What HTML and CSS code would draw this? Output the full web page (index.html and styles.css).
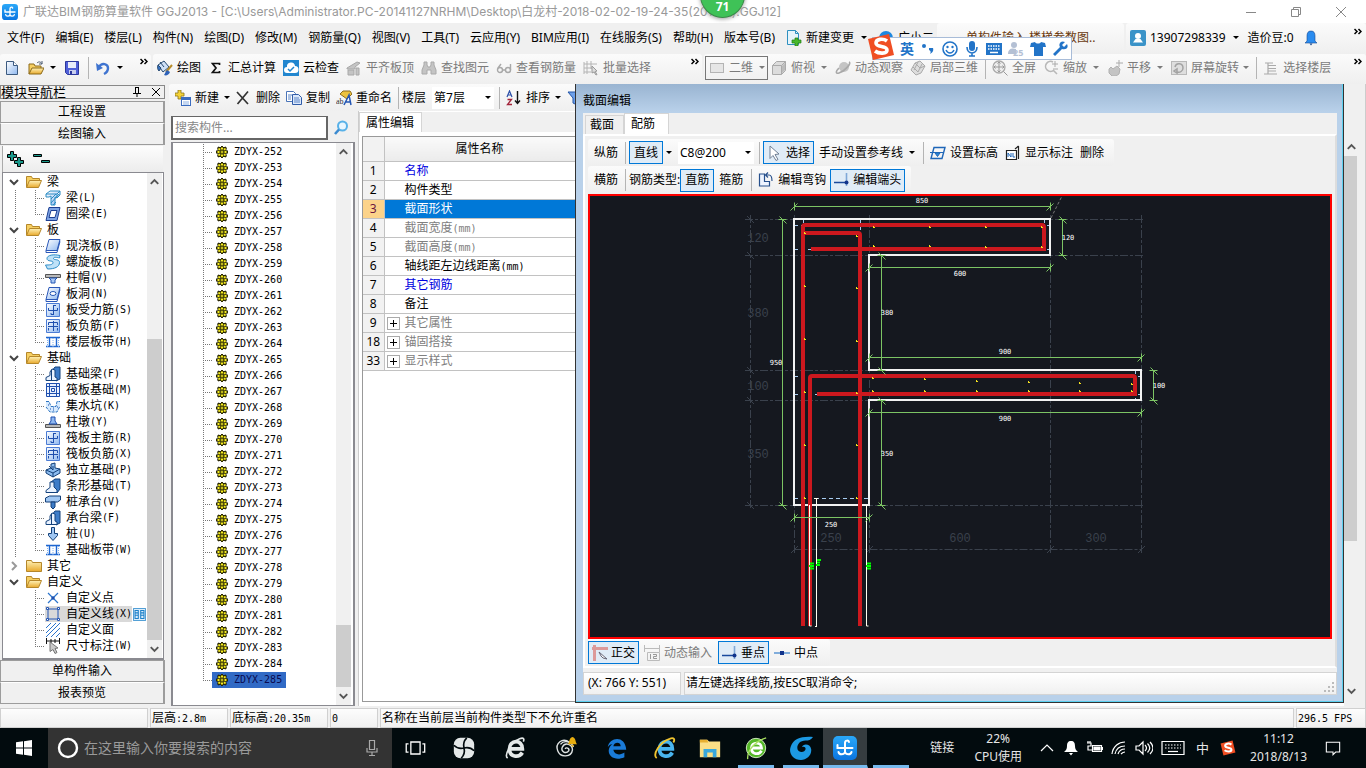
FILE: index.html
```html
<!DOCTYPE html>
<html lang="zh-CN">
<head>
<meta charset="utf-8">
<title>广联达BIM钢筋算量软件 GGJ2013</title>
<link rel="stylesheet" href="styles.css">
</head>
<body>
<svg class="sprite" aria-hidden="true">
  <defs>
    <linearGradient id="gFold" x1="0" y1="0" x2="0" y2="1"><stop offset="0" stop-color="#fff2b8"/><stop offset="1" stop-color="#e8a92c"/></linearGradient>
    <linearGradient id="gBlue" x1="0" y1="0" x2="1" y2="1"><stop offset="0" stop-color="#ffffff"/><stop offset="1" stop-color="#8fb8f0"/></linearGradient>
    <linearGradient id="gApp" x1="0" y1="0" x2="0" y2="1"><stop offset="0" stop-color="#2aa8f8"/><stop offset="1" stop-color="#0a74e0"/></linearGradient>
  </defs>
  <symbol id="app" viewBox="0 0 24 24"><rect width="24" height="24" rx="5" fill="url(#gApp)"/><path d="M4.500 9v3h15M12 17V7c0-3 3.500-3 4-1M12 16c-1 3-6 3-6.500 0M12 16c1 3 6 3 6.500 0" fill="none" stroke="#fff" stroke-width="2" stroke-linecap="round"/></symbol>
  <symbol id="new" viewBox="0 0 16 16"><path d="M2.500 1.500h7l4 4v9h-11z" fill="url(#gBlue)" stroke="#3c5a80"/><path d="M9.500 1.500v4h4" fill="#fff" stroke="#3c5a80"/></symbol>
  <symbol id="open" viewBox="0 0 16 16"><path d="M1 14V4h5l1 2h6v2" fill="#f6cf62" stroke="#8c6a1a"/><path d="M1 14l3-6h12l-3 6z" fill="url(#gFold)" stroke="#8c6a1a"/><path d="M9 3c2-2 4-1 5 1m0-3v3h-3" fill="none" stroke="#4a5a70"/></symbol>
  <symbol id="save" viewBox="0 0 16 16"><path d="M1.500 1.500h13v13h-11l-2-2z" fill="#4f5fd8" stroke="#2c379c"/><path d="M4 2h8v6H4z" fill="#e8ecfa"/><path d="M5 10h7v4H5z" fill="#c9cfee"/><path d="M6 11h2v3H6z" fill="#2c379c"/></symbol>
  <symbol id="undo" viewBox="0 0 16 16"><path d="M4 7c3-5 9-3 9 1 0 3-2 5-4 6" fill="none" stroke="#3f74d0" stroke-width="2.400"/><path d="M1 3l1 8 6-3z" fill="#3f74d0"/></symbol>
  <symbol id="paint" viewBox="0 0 16 16"><path d="M1 5l6-4 5 6-6 5z" fill="#cfe0f6" stroke="#27496f"/><path d="M1 5c-1 3 0 5 1 6l2-3zM3 2l4 5" fill="#3974c4" stroke="#27496f"/><path d="M15 5l-6 7" stroke="#b88c2a" stroke-width="2"/><path d="M10 10l3 2c-1 3-4 4-6 3 1-1 1-3 3-5z" fill="#2e62b8"/></symbol>
  <symbol id="sigma" viewBox="0 0 16 16"><path d="M11.500 5V3.500h-7l3.500 4.500-3.500 4.500h7V11" fill="none" stroke="#111" stroke-width="1.700"/></symbol>
  <symbol id="cloud" viewBox="0 0 16 16"><rect width="16" height="16" fill="#2186cf"/><path d="M4 13a3 3 0 0 1 0-6 4 4 0 0 1 8-1 3.500 3.500 0 0 1 0 7z" fill="#fff"/><path d="M5 9l2 2 4-4" fill="none" stroke="#2186cf" stroke-width="1.500"/></symbol>
  <symbol id="align" viewBox="0 0 16 16"><path d="M1 8l10-6 3 1-5 4v2H1zM2 10h6v5H2zM10 8h3v7h-3z" fill="#c4c4c4" stroke="#a8a8a8"/></symbol>
  <symbol id="find" viewBox="0 0 16 16"><path d="M3 2h3v3l1 2h2l1-2V2h3v3l2 5v4h-5v-4H6v4H1v-4l2-5z" fill="#c4c4c4" stroke="#aaa"/></symbol>
  <symbol id="glass" viewBox="0 0 16 16"><g fill="none" stroke="#a8a8a8" stroke-width="1.400"><circle cx="4" cy="10" r="2.500"/><circle cx="12" cy="10" r="2.500"/><path d="M6.500 10h3M2 8l3-4M14.500 10V4"/></g></symbol>
  <symbol id="batch" viewBox="0 0 16 16"><path d="M1 2v12M4 1v13M8 1v8M1 4h13M1 8h9M1 12h7" stroke="#b4b4b4" fill="none"/><path d="M9 6l5 5-2 .5 2 3-1 .5-2-3-2 1z" fill="#ddd" stroke="#999"/></symbol>
  <symbol id="rect" viewBox="0 0 16 16"><rect x="1.500" y="3.500" width="13" height="9" fill="#e6e6e6" stroke="#b4b4b4"/></symbol>
  <symbol id="cube" viewBox="0 0 16 16"><path d="M1.500 5.500l4-4h9v9l-4 4h-9z" fill="#dcdcdc" stroke="#aaa"/><path d="M1.500 5.500h9v9M10.500 5.500l4-4" fill="none" stroke="#aaa"/><path d="M11 6l3-3v7l-3 3z" fill="#bcbcbc"/></symbol>
  <symbol id="orbit" viewBox="0 0 16 16"><circle cx="9" cy="7" r="5" fill="#c4c4c4"/><path d="M14 2c3 1-4 9-10 11-3 1-4-1 0-5" fill="none" stroke="#a8a8a8" stroke-width="1.600"/></symbol>
  <symbol id="part3d" viewBox="0 0 16 16"><path d="M1 10l4-7 5-2 5 5-4 7-5 2z" fill="#ddd" stroke="#aaa"/><path d="M5 3l5 5 5-2M3 7l5 5M8 2l-4 8M12 4l-4 8" stroke="#aaa" fill="none"/></symbol>
  <symbol id="full" viewBox="0 0 16 16"><circle cx="7" cy="7" r="6" fill="#eee" stroke="#aaa" stroke-width="1.300"/><path d="M7 2v10M2 7h10M5.500 3.500L7 2l1.500 1.500M5.500 10.500L7 12l1.500-1.500M3.500 5.500L2 7l1.500 1.500M10.500 5.500L12 7l-1.500 1.500M11.500 11.500l4 4" stroke="#999" fill="none"/></symbol>
  <symbol id="zoomi" viewBox="0 0 16 16"><path d="M10 2a5 5 0 1 0 1 8M10 10l4 4" fill="none" stroke="#b8b8b8" stroke-width="1.600"/><path d="M12 1v6M9 4h6M10 9h5" stroke="#aaa"/></symbol>
  <symbol id="pan" viewBox="0 0 16 16"><path d="M2 9l2-2 2 2 4-3 3 3-1 5-3 2H5l-3-3z" fill="#c4c4c4" stroke="#b0b0b0"/><path d="M12 0v7M9 3h7" stroke="#aaa"/></symbol>
  <symbol id="rot" viewBox="0 0 16 16"><rect x=".5" y="1.500" width="15" height="13" fill="#dedede" stroke="#b8b8b8"/><path d="M4 7c1-5 8-4 8 1 0 3-3 5-6 4M6 9v4l-3-2z" fill="none" stroke="#a2a2a2" stroke-width="1.500"/></symbol>
  <symbol id="floors" viewBox="0 0 16 16"><path d="M2 3h8M5 5.500h8M5 8.500h8M5 11h8M1 14h13M5 3v11" stroke="#aaa" stroke-width="1.200" fill="none"/></symbol>
  <symbol id="newc" viewBox="0 0 16 16"><path d="M3 0h3v3h3v3H6v3H3V6H0V3h3z" fill="#f4d238" stroke="#8c7416" stroke-width=".8"/><rect x="6.500" y="7.500" width="9" height="8" fill="#fff" stroke="#3b6cc0"/><path d="M7 8h8v2H7z" fill="#3b6cc0"/><path d="M8 12h6M8 14h6" stroke="#8cb0e4"/></symbol>
  <symbol id="del" viewBox="0 0 16 16"><path d="M1 2l11 12M12 1.500L1.500 14" stroke="#333" stroke-width="1.700"/></symbol>
  <symbol id="copy" viewBox="0 0 16 16"><path d="M.5 1.500h7l2 2v8h-9z" fill="#fff" stroke="#4a74b8"/><path d="M6.500 4.500h6l3 3v7h-9z" fill="#dbe8fb" stroke="#2f5ba8"/><path d="M2 5h4M2 7h3M2 9h3M8 8h5M8 10h6M8 12h6" stroke="#5d86c8"/></symbol>
  <symbol id="ren" viewBox="0 0 16 16"><path d="M4 4l3-3h7l2 3-5 5z" fill="#ecc23e" stroke="#8c6a1a"/><text x="0" y="14" font-size="8" font-family="Liberation Serif" fill="#333">ab</text><path d="M8 15l5-10 2 10M10 12h5" fill="none" stroke="#2456b4" stroke-width="1.500"/></symbol>
  <symbol id="sort" viewBox="0 0 16 16"><path d="M1 7l2.500-6L6 7M2 5h3" fill="none" stroke="#2b4fa8" stroke-width="1.200"/><path d="M1.500 9.500h4l-4 5h4.500" fill="none" stroke="#a3243a" stroke-width="1.300"/><path d="M11.500 1v12M9 10.500l2.500 3 2.500-3" fill="none" stroke="#111" stroke-width="1.400"/></symbol>
  <symbol id="filter" viewBox="0 0 16 16"><path d="M1 2h14l-5 6v7l-4-2V8z" fill="#6da0ea" stroke="#2556a8"/></symbol>
  <symbol id="mag" viewBox="0 0 16 16"><circle cx="9.500" cy="6" r="4.500" fill="#e8f6ff" stroke="#58b1e8" stroke-width="2"/><path d="M6 9.500l-4 4.500" stroke="#3a8ad0" stroke-width="2.600"/></symbol>
  <symbol id="docadd" viewBox="0 0 16 16"><path d="M1.500.5h8l3 3v11h-11z" fill="#e6f4fb" stroke="#2e90c0"/><path d="M9.500.5v3h3" fill="none" stroke="#2e90c0"/><path d="M9 8h3v2h3v3h-3v3H9v-3H6v-3h3z" fill="#48b82c" stroke="#1f7d16" stroke-width=".7"/></symbol>
  <symbol id="user" viewBox="0 0 16 16"><rect width="16" height="16" rx="2" fill="#3a93c8"/><circle cx="8" cy="6" r="3" fill="#fff"/><path d="M3 12.500h10L10.500 9h-5z" fill="#fff"/></symbol>
  <symbol id="bell" viewBox="0 0 16 16"><path d="M8 1c3 0 4 2 4 5s1 4 3 6H1c2-2 3-3 3-6s1-5 4-5zM6 13h4l-2 2.500z" fill="currentColor"/></symbol>
  <symbol id="bell2" viewBox="0 0 16 16"><path d="M8 1c3 0 4 2 4 5v5l2 2H2l2-2V6c0-3 1-5 4-5z" fill="#2a8cf0" stroke="#1a4a90" stroke-width=".6"/><path d="M6.500 13.500h3L8 15.500z" fill="#1a4a90"/></symbol>
  <symbol id="chev" viewBox="0 0 16 16"><path d="M4 6l4 4 4-4" fill="none" stroke="currentColor" stroke-width="2"/></symbol>
  <symbol id="more" viewBox="0 0 8 8"><path d="M.5 1L3 3.500.5 6M4.500 1L7 3.500 4.500 6" fill="none" stroke="#000" stroke-width="1.500"/></symbol>
  <symbol id="fopen" viewBox="0 0 16 16"><path d="M.5 13V2.500h5l1 2h7V7" fill="#f6cf62" stroke="#b5872a"/><path d="M.5 13.500l3-7h12l-3 7z" fill="url(#gFold)" stroke="#b5872a"/></symbol>
  <symbol id="fshut" viewBox="0 0 16 16"><path d="M.5 13.500v-11h5l1 2h9v9z" fill="url(#gFold)" stroke="#b5872a"/></symbol>
  <symbol id="t-beam" viewBox="0 0 16 16"><path d="M1 4l4-3h10l-3 3zM1 4v3h3l2-1v9h4V7l2 1V4M12 8l3-3V1" fill="url(#gBlue)" stroke="#2b8cc4"/><path d="M6 13l8-9M6 9l5-5M8 15l3-3" stroke="#2b8cc4"/></symbol>
  <symbol id="t-ring" viewBox="0 0 16 16"><path d="M4 1.500h11l-3 13H1z" fill="#7fa4e4" stroke="#1c3f92"/><path d="M6 4.500h6L10 11.500H4z" fill="#fff" stroke="#1c3f92"/></symbol>
  <symbol id="t-slab" viewBox="0 0 16 16"><path d="M4 1.500h11l-3 11H1z" fill="url(#gBlue)" stroke="#2b58b8"/><path d="M1 12.500v2h11l3-11" fill="none" stroke="#2b58b8"/></symbol>
  <symbol id="t-spiral" viewBox="0 0 16 16"><path d="M15 1.500C9 0 2 1 2 4.500 2 8 8 6 8 8.500S4 11 .5 11l2 4c7 0 12-2 12-6.500 0-4-6-2-6-4s4-1 6-.5z" fill="#bfe2f8" stroke="#2c8cc8"/></symbol>
  <symbol id="t-cap" viewBox="0 0 16 16"><path d="M.5 4.500h15v3H.5z" fill="#b8b8b8" stroke="#555"/><path d="M4 8h8l-2 2v3H6v-3z" fill="#a9c8f4" stroke="#2456b4"/></symbol>
  <symbol id="t-hole" viewBox="0 0 16 16"><path d="M4 1.500h11l-3 12H1z" fill="url(#gBlue)" stroke="#2b58b8"/><ellipse cx="8" cy="7.500" rx="3" ry="2" fill="#fff" stroke="#2456b4"/><path d="M1 13.500v2h11l3-12" fill="none" stroke="#2b58b8"/></symbol>
  <symbol id="t-reb1" viewBox="0 0 16 16"><path d="M1.500 1.500h13v13h-13z" fill="url(#gBlue)" stroke="#4c7cd4"/><path d="M8.500 3v10M8 3.500h3M3.500 6v2.500h9V6M8 12.500H6V11" fill="none" stroke="#1e4fae"/></symbol>
  <symbol id="t-reb2" viewBox="0 0 16 16"><path d="M1.500 1.500h13v13h-13z" fill="url(#gBlue)" stroke="#4c7cd4"/><path d="M8.500 3v10M3.500 7V4.500h9V7M3 8.500h10M3.500 10v2.500M12.500 10v2.500" fill="none" stroke="#1e4fae"/></symbol>
  <symbol id="t-band" viewBox="0 0 16 16"><path d="M1 3.500h14M1 12.500h14M4.500 3v10M11.500 3v10" stroke="#1e66d0" stroke-width="1.400"/><path d="M2.500 4v9M13.500 4v9M8 4v9" stroke="#7fb0f0" stroke-dasharray="1 1"/></symbol>
  <symbol id="t-fbeam" viewBox="0 0 16 16"><path d="M6 6l4-5h5v12l-4 2" fill="#3d7cc8" stroke="#14427c"/><path d="M1 14.500v-3l4-2V6l2-3 3 1v7l2 1v2.500z" fill="#eaf3ff" stroke="#14427c"/><path d="M6.500 4v10" stroke="#14427c"/></symbol>
  <symbol id="t-raft" viewBox="0 0 16 16"><path d="M1.500 1.500h13v13h-13z" fill="#eaf2ff" stroke="#1e4fae"/><path d="M4.500 2v12M11.500 2v12M2 4.500h12M2 11.500h12M6.500 6.500h3v3h-3z" fill="none" stroke="#1e4fae"/></symbol>
  <symbol id="t-pit" viewBox="0 0 16 16"><path d="M1 3h3l2 5h5l1-5h3v5l-3 6H5L1 9z" fill="#d6ebff"/><path d="M1 3.500h3l2 5h5l1-5h3M1 9l4 5h7l3-6" fill="none" stroke="#2f74c0" stroke-dasharray="3 1"/><path d="M3 7h1M5 11h1M8 12h1M12 9h1M8 10h1" stroke="#1e4fae"/></symbol>
  <symbol id="t-pier" viewBox="0 0 16 16"><path d="M.5 10.500h15v3H.5z" fill="#b8b8b8" stroke="#555"/><path d="M4 10l2-3V3h4v4l2 3z" fill="#8fb8f0" stroke="#1e4fae"/></symbol>
  <symbol id="t-iso" viewBox="0 0 16 16"><path d="M1 8l5-2V2l4-1v5l5 1v4l-7 4-7-4z" fill="#8cbcf0" stroke="#123f78"/><path d="M1 8l7 3 7-4M8 11v4M4 4l4 4V4" fill="none" stroke="#123f78"/></symbol>
  <symbol id="t-strip" viewBox="0 0 16 16"><path d="M6 4l4-3h5v10l-3 4" fill="#3d7cc8" stroke="#14427c"/><path d="M1 14.500v-2l4-3V4h4v5l3 3v2.500z" fill="#eaf3ff" stroke="#14427c"/></symbol>
  <symbol id="t-pcap" viewBox="0 0 16 16"><path d="M.5 4l4-2h11v4l-3 2H.5z" fill="#9fc6f2" stroke="#123f78"/><path d="M6 8v5l2 2 2-2V8z" fill="#3d7cc8" stroke="#123f78"/></symbol>
  <symbol id="t-pile" viewBox="0 0 16 16"><path d="M6.500 1.500h3v6h3v2L8 14.500 3.500 9.500v-2h3z" fill="#9fc6f2" stroke="#123f78"/></symbol>
  <symbol id="t-pt" viewBox="0 0 16 16"><path d="M3 3l10 10M13 3L3 13" stroke="#2b74cc" stroke-width="1.200"/><circle cx="8" cy="8" r="1.700" fill="#1e4fae"/></symbol>
  <symbol id="t-line" viewBox="0 0 16 16"><path d="M3 3h10v10H3z" fill="none" stroke="#2456b4"/><g fill="#fff" stroke="#2456b4"><path d="M1.500 1.500h2v2h-2zM12.500 1.500h2v2h-2zM1.500 12.500h2v2h-2zM12.500 12.500h2v2h-2z"/></g></symbol>
  <symbol id="t-face" viewBox="0 0 16 16"><path d="M1 6l5-5M1 11L11 1M1 15L15 1M6 15l9-9M11 15l4-4" stroke="#2b74cc"/></symbol>
  <symbol id="t-dim" viewBox="0 0 16 16"><path d="M1.500 0v6M14.500 0v6M1 3h14M6 1v4M10 1v4" stroke="#111"/><path d="M5 4l8 6-3 .5 2 4-2 1-2-4-3 2z" fill="#c9c9c9" stroke="#777"/></symbol>
  <symbol id="t-col" viewBox="0 0 16 16"><path d="M.5.5h15v15H.5z" fill="#dceefc" stroke="#1c80c8"/><path d="M2.500 3h4v10h-4zM9.500 3h4v10h-4zM3 6h3M3 9h3M10 6h3M10 9h3" fill="none" stroke="#1c80c8" stroke-width="1.300"/></symbol>
  <symbol id="gear" viewBox="0 0 12 12"><path d="M5 0h2v1h1.500l1-.5 1.500 1.500-.5 1V4.500h1.500v3h-1.500V9l.5 1-1.500 1.500-1-.5H7v1H5v-1H3.500l-1 .5L1 10l.5-1V7.500H0v-3h1.500V3L1 2 2.500.5l1 .5H5z" fill="#2a2806"/><path d="M5 1.500h2v2H5zM5 8.500h2v2H5zM1.500 5h2v2h-2zM8.500 5h2v2h-2zM2.300 2.300h2v2h-2zM7.700 2.300h2v2h-2zM2.300 7.700h2v2h-2zM7.700 7.700h2v2h-2zM4.800 4.800h2.400v2.400H4.800z" fill="#f8ee20"/><path d="M5.500 5.500h1v1h-1z" fill="#111"/></symbol>
  <symbol id="arrow" viewBox="0 0 16 16"><path d="M3 1l9 8-4 .5 3 5-2 1-3-5-3 3z" fill="#fff" stroke="#6f7f94"/></symbol>
  <symbol id="elev" viewBox="0 0 16 16"><path d="M4 2.500h11l-3 11H1z" fill="none" stroke="#1e66b8" stroke-width="1.400"/><path d="M0 7.500h14M5 8h5l-2.500 3.500z" fill="#2b8ad8" stroke="#1e66b8"/></symbol>
  <symbol id="note" viewBox="0 0 16 16"><path d="M1.500 5.500h10v9h-10zM13.500 1v13M10 4l3.500-3" fill="#fff" stroke="#222" stroke-width="1.200"/><path d="M3 12V8l3 4V8M8 8v4h2" fill="none" stroke="#1e66b8"/></symbol>
  <symbol id="hook" viewBox="0 0 16 16"><path d="M1.500 2v12h10v-4.500h-5v-7.500z" fill="#eef4ff" stroke="#27508c" stroke-width="1.200"/><path d="M7 3h4c2 0 3 2 3 6M10 .5L7.500 3 10 5.500" fill="none" stroke="#27508c" stroke-width="1.200"/></symbol>
  <symbol id="foot" viewBox="0 0 16 16"><path d="M12.500 1v13" stroke="#7fa8d8" stroke-width="1.600"/><path d="M0 10.500h12" stroke="#1a4a9c" stroke-width="1.500"/><circle cx="12.500" cy="10.500" r="2" fill="#12348c"/></symbol>
  <symbol id="ortho" viewBox="0 0 16 16"><path d="M2.500 0v16M0 3.500h16" stroke="#dc9a9a" stroke-width="3"/><path d="M7 7l8 7-4-1-2-2z" fill="#fff" stroke="#667"/></symbol>
  <symbol id="dyn" viewBox="0 0 16 16"><path d="M.5 0v7M15.500 0v7M1 3.500h14M3.500 7.500h12v8h-12z" fill="none" stroke="#bbb"/><path d="M6.500 9v5M9 9.500h3.500v2H9.500v2h3.500" fill="none" stroke="#999"/></symbol>
  <symbol id="mid" viewBox="0 0 16 16"><path d="M0 8h16" stroke="#4f8fd0" stroke-width="1.400"/><path d="M6 6h4v4H6z" fill="#12348c"/></symbol>
  <symbol id="sogou" viewBox="0 0 28 28"><path d="M1 6l21-5 5 21-21 5z" fill="#f04e23"/><path d="M20 8c-4-3-11-2-11 2 0 5 11 2 11 7 0 4-8 4-12 1" fill="none" stroke="#fff" stroke-width="3.600"/></symbol>
</svg>

<div class="window">
  <header class="titlebar">
    <svg class="ic"><use href="#app"/></svg>
    <h1>广联达BIM钢筋算量软件 GGJ2013 - [C:\Users\Administrator.PC-20141127NRHM\Desktop\白龙村-2018-02-02-19-24-35(2016版).GGJ12]</h1>
    <div class="winbtns">
      <button aria-label="最小化"><svg viewBox="0 0 12 12"><path d="M1 6.500h10" /></svg></button>
      <button aria-label="还原"><svg viewBox="0 0 12 12"><path d="M1.500 3.500h7v7h-7zM3.500 3.500v-2h7v7h-2"/></svg></button>
      <button aria-label="关闭"><svg viewBox="0 0 12 12"><path d="M1 1l10 10M11 1L1 11"/></svg></button>
    </div>
  </header>
  <div class="ball">71</div>

  <div class="menurow">
    <nav class="menu">
      <button>文件(F)</button><button>编辑(E)</button><button>楼层(L)</button><button>构件(N)</button><button>绘图(D)</button><button>修改(M)</button><button>钢筋量(Q)</button><button>视图(V)</button><button>工具(T)</button><button>云应用(Y)</button><button>BIM应用(I)</button><button>在线服务(S)</button><button>帮助(H)</button><button>版本号(B)</button>
      <button class="wic"><svg class="ic"><use href="#docadd"/></svg>新建变更<span class="caret"></span></button>
      <button class="wic"><svg class="ic" viewBox="0 0 16 16"><circle cx="8" cy="8" r="7" fill="#1e88e0"/></svg>广小二</button>
    </nav>
    <div class="seg hint"><span>单构件输入 楼梯参数图..</span></div>
    <div class="seg acct">
      <button class="wic"><svg class="ic"><use href="#user"/></svg>13907298339<span class="caret"></span></button>
      <span>造价豆:0</span>
      <svg class="ic"><use href="#bell2"/></svg>
      <svg class="more"><use href="#more"/></svg>
    </div>
  </div>

  <div class="toolrow">
    <div class="seg s1">
      <button class="tb" aria-label="新建"><svg class="ic"><use href="#new"/></svg></button>
      <button class="tb" aria-label="打开"><svg class="ic"><use href="#open"/></svg><span class="caret"></span></button>
      <button class="tb" aria-label="保存"><svg class="ic"><use href="#save"/></svg></button>
      <i class="sep"></i>
      <button class="tb" aria-label="撤销"><svg class="ic"><use href="#undo"/></svg><span class="caret"></span></button>
      <svg class="more"><use href="#more"/></svg>
    </div>
    <div class="seg s2">
      <button class="tb"><svg class="ic"><use href="#paint"/></svg>绘图</button>
      <button class="tb"><svg class="ic"><use href="#sigma"/></svg>汇总计算</button>
      <button class="tb"><svg class="ic"><use href="#cloud"/></svg>云检查</button>
      <button class="tb off"><svg class="ic"><use href="#align"/></svg>平齐板顶</button>
      <button class="tb off"><svg class="ic"><use href="#find"/></svg>查找图元</button>
      <button class="tb off"><svg class="ic"><use href="#glass"/></svg>查看钢筋量</button>
      <button class="tb off"><svg class="ic"><use href="#batch"/></svg>批量选择</button>
      <svg class="more"><use href="#more"/></svg>
    </div>
    <div class="seg s3">
      <button class="tb off boxed"><svg class="ic"><use href="#rect"/></svg>二维<span class="caret"></span></button>
      <button class="tb off"><svg class="ic"><use href="#cube"/></svg>俯视<span class="caret"></span></button>
      <button class="tb off"><svg class="ic"><use href="#orbit"/></svg>动态观察</button>
      <button class="tb off"><svg class="ic"><use href="#part3d"/></svg>局部三维</button>
      <i class="sep"></i>
      <button class="tb off"><svg class="ic"><use href="#full"/></svg>全屏</button>
      <button class="tb off"><svg class="ic"><use href="#zoomi"/></svg>缩放<span class="caret"></span></button>
      <button class="tb off"><svg class="ic"><use href="#pan"/></svg>平移<span class="caret"></span></button>
      <button class="tb off tight"><svg class="ic"><use href="#rot"/></svg>屏幕旋转<span class="caret"></span></button>
      <i class="sep"></i>
      <button class="tb off"><svg class="ic"><use href="#floors"/></svg>选择楼层</button>
      <svg class="more"><use href="#more"/></svg>
    </div>
  </div>

  <main class="main">
    <aside class="nav">
      <div class="navhead"><span>模块导航栏</span>
        <svg viewBox="0 0 10 10"><path d="M3.500 0v6M3 .5h4M6.500 0v6M1 6.500h8M5 7v3" fill="none" stroke="#000"/></svg>
        <svg viewBox="0 0 10 10"><path d="M1 1l8 8M9 1L1 9" stroke="#000"/></svg>
      </div>
      <button class="bar">工程设置</button>
      <button class="bar">绘图输入</button>
      <div class="navtools">
        <button aria-label="全部展开"><svg viewBox="0 0 18 16"><path d="M3.500.5h3v3h3v3h-3v3h-3v-3h-3v-3h3z" fill="#1a9a8c" stroke="#000"/><path d="M10.500 6.500h3v3h3v3h-3v3h-3v-3h-3v-3h3z" fill="#1a9a8c" stroke="#000"/></svg></button>
        <button aria-label="全部折叠"><svg viewBox="0 0 18 16"><path d="M.5 3.500h8v2h-8zM8.500 9.500h8v2h-8z" fill="#1a9a8c" stroke="#000"/></svg></button>
      </div>
      <div class="treebox navtree">
        <ul class="tree">
          <li class="g"><svg class="ch"><use href="#chev"/></svg><svg class="ic"><use href="#fopen"/></svg>梁</li>
          <li class="c"><svg class="ic"><use href="#t-beam"/></svg>梁<kbd>(L)</kbd></li>
          <li class="c end"><svg class="ic"><use href="#t-ring"/></svg>圈梁<kbd>(E)</kbd></li>
          <li class="g"><svg class="ch"><use href="#chev"/></svg><svg class="ic"><use href="#fopen"/></svg>板</li>
          <li class="c"><svg class="ic"><use href="#t-slab"/></svg>现浇板<kbd>(B)</kbd></li>
          <li class="c"><svg class="ic"><use href="#t-spiral"/></svg>螺旋板<kbd>(B)</kbd></li>
          <li class="c"><svg class="ic"><use href="#t-cap"/></svg>柱帽<kbd>(V)</kbd></li>
          <li class="c"><svg class="ic"><use href="#t-hole"/></svg>板洞<kbd>(N)</kbd></li>
          <li class="c"><svg class="ic"><use href="#t-reb1"/></svg>板受力筋<kbd>(S)</kbd></li>
          <li class="c"><svg class="ic"><use href="#t-reb2"/></svg>板负筋<kbd>(F)</kbd></li>
          <li class="c end"><svg class="ic"><use href="#t-band"/></svg>楼层板带<kbd>(H)</kbd></li>
          <li class="g"><svg class="ch"><use href="#chev"/></svg><svg class="ic"><use href="#fopen"/></svg>基础</li>
          <li class="c"><svg class="ic"><use href="#t-fbeam"/></svg>基础梁<kbd>(F)</kbd></li>
          <li class="c"><svg class="ic"><use href="#t-raft"/></svg>筏板基础<kbd>(M)</kbd></li>
          <li class="c"><svg class="ic"><use href="#t-pit"/></svg>集水坑<kbd>(K)</kbd></li>
          <li class="c"><svg class="ic"><use href="#t-pier"/></svg>柱墩<kbd>(Y)</kbd></li>
          <li class="c"><svg class="ic"><use href="#t-reb1"/></svg>筏板主筋<kbd>(R)</kbd></li>
          <li class="c"><svg class="ic"><use href="#t-reb2"/></svg>筏板负筋<kbd>(X)</kbd></li>
          <li class="c"><svg class="ic"><use href="#t-iso"/></svg>独立基础<kbd>(P)</kbd></li>
          <li class="c"><svg class="ic"><use href="#t-strip"/></svg>条形基础<kbd>(T)</kbd></li>
          <li class="c"><svg class="ic"><use href="#t-pcap"/></svg>桩承台<kbd>(V)</kbd></li>
          <li class="c"><svg class="ic"><use href="#t-fbeam"/></svg>承台梁<kbd>(F)</kbd></li>
          <li class="c"><svg class="ic"><use href="#t-pile"/></svg>桩<kbd>(U)</kbd></li>
          <li class="c end"><svg class="ic"><use href="#t-band"/></svg>基础板带<kbd>(W)</kbd></li>
          <li class="g shut"><svg class="ch"><use href="#chev"/></svg><svg class="ic"><use href="#fshut"/></svg>其它</li>
          <li class="g"><svg class="ch"><use href="#chev"/></svg><svg class="ic"><use href="#fopen"/></svg>自定义</li>
          <li class="c last"><svg class="ic"><use href="#t-pt"/></svg>自定义点</li>
          <li class="c last"><span class="cur"><svg class="ic"><use href="#t-line"/></svg>自定义线<kbd>(X)</kbd></span><svg class="colbtn"><use href="#t-col"/></svg></li>
          <li class="c last"><svg class="ic"><use href="#t-face"/></svg>自定义面</li>
          <li class="c last end"><svg class="ic"><use href="#t-dim"/></svg>尺寸标注<kbd>(W)</kbd></li>
        </ul>
        <div class="sb"><svg class="up"><use href="#chev"/></svg><i class="grow"></i><b class="th-nav"></b><svg><use href="#chev"/></svg></div>
      </div>
      <button class="bar">单构件输入</button>
      <button class="bar">报表预览</button>
    </aside>

    <section class="work">
      <div class="seg subtools">
        <button class="tb"><svg class="ic"><use href="#newc"/></svg>新建<span class="caret"></span></button>
        <button class="tb"><svg class="ic"><use href="#del"/></svg>删除</button>
        <button class="tb"><svg class="ic"><use href="#copy"/></svg>复制</button>
        <button class="tb"><svg class="ic"><use href="#ren"/></svg>重命名</button>
        <i class="sep"></i>
        <label for="floor">楼层</label>
        <span class="combo"><select id="floor"><option>第7层</option></select><span class="caret"></span></span>
        <i class="sep"></i>
        <button class="tb"><svg class="ic"><use href="#sort"/></svg>排序<span class="caret"></span></button>
        <button class="tb" aria-label="过滤"><svg class="ic"><use href="#filter"/></svg></button>
      </div>
      <div class="cols">
        <section class="comps">
          <div class="search"><input type="text" aria-label="搜索构件" placeholder="搜索构件..."><button aria-label="搜索"><svg class="ic"><use href="#mag"/></svg></button></div>
          <div class="treebox">
            <ul class="tree items">
              <li><span><svg><use href="#gear"/></svg>ZDYX-252</span></li>
              <li><span><svg><use href="#gear"/></svg>ZDYX-253</span></li>
              <li><span><svg><use href="#gear"/></svg>ZDYX-254</span></li>
              <li><span><svg><use href="#gear"/></svg>ZDYX-255</span></li>
              <li><span><svg><use href="#gear"/></svg>ZDYX-256</span></li>
              <li><span><svg><use href="#gear"/></svg>ZDYX-257</span></li>
              <li><span><svg><use href="#gear"/></svg>ZDYX-258</span></li>
              <li><span><svg><use href="#gear"/></svg>ZDYX-259</span></li>
              <li><span><svg><use href="#gear"/></svg>ZDYX-260</span></li>
              <li><span><svg><use href="#gear"/></svg>ZDYX-261</span></li>
              <li><span><svg><use href="#gear"/></svg>ZDYX-262</span></li>
              <li><span><svg><use href="#gear"/></svg>ZDYX-263</span></li>
              <li><span><svg><use href="#gear"/></svg>ZDYX-264</span></li>
              <li><span><svg><use href="#gear"/></svg>ZDYX-265</span></li>
              <li><span><svg><use href="#gear"/></svg>ZDYX-266</span></li>
              <li><span><svg><use href="#gear"/></svg>ZDYX-267</span></li>
              <li><span><svg><use href="#gear"/></svg>ZDYX-268</span></li>
              <li><span><svg><use href="#gear"/></svg>ZDYX-269</span></li>
              <li><span><svg><use href="#gear"/></svg>ZDYX-270</span></li>
              <li><span><svg><use href="#gear"/></svg>ZDYX-271</span></li>
              <li><span><svg><use href="#gear"/></svg>ZDYX-272</span></li>
              <li><span><svg><use href="#gear"/></svg>ZDYX-273</span></li>
              <li><span><svg><use href="#gear"/></svg>ZDYX-274</span></li>
              <li><span><svg><use href="#gear"/></svg>ZDYX-275</span></li>
              <li><span><svg><use href="#gear"/></svg>ZDYX-276</span></li>
              <li><span><svg><use href="#gear"/></svg>ZDYX-277</span></li>
              <li><span><svg><use href="#gear"/></svg>ZDYX-278</span></li>
              <li><span><svg><use href="#gear"/></svg>ZDYX-279</span></li>
              <li><span><svg><use href="#gear"/></svg>ZDYX-280</span></li>
              <li><span><svg><use href="#gear"/></svg>ZDYX-281</span></li>
              <li><span><svg><use href="#gear"/></svg>ZDYX-282</span></li>
              <li><span><svg><use href="#gear"/></svg>ZDYX-283</span></li>
              <li><span><svg><use href="#gear"/></svg>ZDYX-284</span></li>
              <li class="end"><span class="sel"><svg><use href="#gear"/></svg>ZDYX-285</span></li>
            </ul>
            <div class="sb"><svg class="up"><use href="#chev"/></svg><i class="grow"></i><b class="th-comp"></b><svg><use href="#chev"/></svg></div>
          </div>
        </section>
        <section class="props">
          <div class="tabs"><button class="on">属性编辑</button></div>
          <div class="propbox">
            <table>
              <thead><tr><th class="n"></th><th class="name">属性名称</th><th></th></tr></thead>
              <tbody>
                <tr><td class="n">1</td><td class="blue">名称</td><td></td></tr>
                <tr><td class="n">2</td><td>构件类型</td><td></td></tr>
                <tr class="hot"><td class="n">3</td><td>截面形状</td><td></td></tr>
                <tr><td class="n">4</td><td class="dim">截面宽度<kbd>(mm)</kbd></td><td></td></tr>
                <tr><td class="n">5</td><td class="dim">截面高度<kbd>(mm)</kbd></td><td></td></tr>
                <tr><td class="n">6</td><td>轴线距左边线距离<kbd>(mm)</kbd></td><td></td></tr>
                <tr><td class="n">7</td><td class="blue">其它钢筋</td><td></td></tr>
                <tr><td class="n">8</td><td>备注</td><td></td></tr>
                <tr><td class="n">9</td><td class="dim ex"><button aria-label="展开"></button>其它属性</td><td></td></tr>
                <tr><td class="n">18</td><td class="dim ex"><button aria-label="展开"></button>锚固搭接</td><td></td></tr>
                <tr><td class="n">33</td><td class="dim ex"><button aria-label="展开"></button>显示样式</td><td></td></tr>
              </tbody>
            </table>
          </div>
        </section>
      </div>
    </section>
    <div class="sb edge"><svg class="up"><use href="#chev"/></svg><b class="th-edge"></b><i class="grow"></i><svg><use href="#chev"/></svg></div>

    <section class="dialog" role="dialog" aria-label="截面编辑">
      <h2>截面编辑</h2>
      <div class="dbody">
        <div class="tabs dtabs"><button>截面</button><button class="on">配筋</button></div>
        <div class="dpanel">
          <div class="seg drow">
            <span class="lab">纵筋</span><i class="sep"></i>
            <button class="pb on">直线</button><button class="cb" aria-label="线型"><span class="caret"></span></button>
            <span class="combo c8"><select aria-label="钢筋规格"><option>C8@200</option></select><span class="caret"></span></span>
            <i class="sep"></i>
            <button class="pb pi on"><svg class="ic"><use href="#arrow"/></svg>选择</button>
            <button class="pb">手动设置参考线<span class="caret"></span></button>
            <i class="sep"></i>
            <button class="tb"><svg class="ic"><use href="#elev"/></svg>设置标高</button>
            <button class="tb"><svg class="ic"><use href="#note"/></svg>显示标注</button>
            <button class="tb">删除</button>
          </div>
          <div class="seg drow">
            <span class="lab">横筋</span><i class="sep"></i>
            <span>钢筋类型:</span>
            <button class="pb on">直筋</button><button class="pb">箍筋</button>
            <i class="sep"></i>
            <button class="tb"><svg class="ic"><use href="#hook"/></svg>编辑弯钩</button>
            <button class="pb pi on"><svg class="ic"><use href="#foot"/></svg>编辑端头</button>
          </div>
          <div class="canvas">
            <svg viewBox="590 196 740 441" preserveAspectRatio="xMidYMin meet" role="img" aria-label="截面配筋图">
              <defs>
                <g id="tk"><path d="M0-4v8M-4 4l7-7"/></g>
                <g id="tv"><path d="M-4 0h8M-3-3l7 7"/></g>
                <path id="d" d="M0 0v2h2v-1h-1v-1z"/>
              </defs>
              <g class="axis">
                <path d="M745 219.500h400M745 255.500h400M745 370.500h400M745 400.500h400M745 505.500h400M794.500 549.500h347M750.500 215v295M794.500 215v339M869.500 215v339M1050.500 215v339M1141.500 215v339"/>
                <path class="solid" d="M747 216l7 7M747 252l7 7M747 367l7 7M747 397l7 7M747 502l7 7M791 553l7-7M866 553l7-7M1047 553l7-7M1138 553l7-7"/>
                <path class="far" d="M1051 218l11-22"/>
              </g>
              <g class="axt">
                <text x="758" y="242">120</text><text x="758" y="317">380</text><text x="758" y="390">100</text><text x="758" y="458">350</text>
                <text x="831" y="542">250</text><text x="960" y="542">600</text><text x="1096" y="542">300</text>
              </g>
              <path class="cover" d="M794 225.500h10M794 249.500h18M803.500 219v8M860.500 219v14M1044.500 219v36M1040 225.500h10M1040 249.500h10M794 376.500h14M794 394.500h23M1135.500 370v30M1131 376.500h10M1131 394.500h10M794 498.500h75"/>
              <path class="wall" d="M794 219h256v36H869v115h272v30H869v105h-75z"/>
              <path class="steel" d="M803 626V227q0-2 2-2h237q2 0 2 2v22H811M803 233h55q2 0 2 2v391M810 626V378q0-2 2-2h321q2 0 2 2v16H817"/>
              <path class="lead" d="M809.500 505v121h2M816.500 627v-129M814 498.500h4M866.500 505v121h2M815 626.500h2"/>
              <g class="dimg">
                <path d="M794.500 206.500h256M782.500 219.500v286M1062.500 219.500v36M869.500 267.500h181M881.500 255.500v115M869.500 357.500h272M1153.500 370.500v30M869.500 412.500h272M881.500 400.500v105M794.500 517.500h75"/>
                <use href="#tk" x="794.500" y="206.500"/><use href="#tk" x="1050.500" y="206.500"/><use href="#tk" x="869.500" y="267.500"/><use href="#tk" x="1050.500" y="267.500"/><use href="#tk" x="869.500" y="357.500"/><use href="#tk" x="1141.500" y="357.500"/><use href="#tk" x="869.500" y="412.500"/><use href="#tk" x="1141.500" y="412.500"/><use href="#tk" x="794.500" y="517.500"/><use href="#tk" x="869.500" y="517.500"/>
                <use href="#tv" x="782.500" y="219.500"/><use href="#tv" x="782.500" y="505.500"/><use href="#tv" x="1062.500" y="219.500"/><use href="#tv" x="1062.500" y="255.500"/><use href="#tv" x="881.500" y="255.500"/><use href="#tv" x="881.500" y="370.500"/><use href="#tv" x="1153.500" y="370.500"/><use href="#tv" x="1153.500" y="400.500"/><use href="#tv" x="881.500" y="400.500"/><use href="#tv" x="881.500" y="505.500"/>
              </g>
              <g class="dots">
                <use href="#d" x="873" y="226"/><use href="#d" x="929" y="226"/><use href="#d" x="985" y="226"/><use href="#d" x="1041" y="226"/><use href="#d" x="873" y="245"/><use href="#d" x="929" y="245"/><use href="#d" x="985" y="246"/><use href="#d" x="1041" y="246"/>
                <use href="#d" x="804" y="232"/><use href="#d" x="856" y="235"/><use href="#d" x="804" y="285"/><use href="#d" x="856" y="287"/><use href="#d" x="804" y="338"/><use href="#d" x="856" y="340"/><use href="#d" x="804" y="391"/><use href="#d" x="856" y="392"/><use href="#d" x="804" y="444"/><use href="#d" x="856" y="444"/><use href="#d" x="804" y="497"/><use href="#d" x="856" y="497"/>
                <use href="#d" x="872" y="377"/><use href="#d" x="924" y="378"/><use href="#d" x="976" y="380"/><use href="#d" x="1028" y="381"/><use href="#d" x="1079" y="382"/><use href="#d" x="1131" y="383"/><use href="#d" x="872" y="390"/><use href="#d" x="924" y="390"/><use href="#d" x="976" y="390"/><use href="#d" x="1028" y="390"/><use href="#d" x="1079" y="390"/><use href="#d" x="1131" y="390"/>
              </g>
              <g class="dimt">
                <text x="922" y="203">850</text><text x="776" y="365">950</text><text x="1068" y="240">120</text><text x="960" y="276">600</text><text x="887" y="315">380</text><text x="1005" y="354">900</text><text x="1159" y="388">100</text><text x="1005" y="421">900</text><text x="887" y="456">350</text><text x="831" y="527">250</text>
              </g>
              <path class="grn" d="M810 563.500h4M809 566h5M810 568.500h4M817 560h4M817 562.500h3M816 565h4M867 563.500h4M866 566h5M867 568.500h4"/>
            </svg>
          </div>
          <div class="seg snap">
            <button class="pb pi on"><svg class="ic"><use href="#ortho"/></svg>正交</button>
            <button class="tb off"><svg class="ic"><use href="#dyn"/></svg>动态输入</button>
            <button class="pb pi on"><svg class="ic"><use href="#foot"/></svg>垂点</button>
            <button class="tb"><svg class="ic"><use href="#mid"/></svg>中点</button>
          </div>
        </div>
        <div class="dstatus"><span class="xy">(X: 766 Y: 551)</span><span class="msg">请左键选择线筋,按ESC取消命令;<svg viewBox="0 0 12 12"><path d="M8 0h2v2H8zM4 4h2v2H4zM8 4h2v2H8zM0 8h2v2H0zM4 8h2v2H4zM8 8h2v2H8z" fill="#bbb"/></svg></span></div>
      </div>
    </section>
  </main>

  <footer class="status">
    <span class="w1"></span><span class="w2">层高<kbd>:2.8m</kbd></span><span class="w3">底标高<kbd>:20.35m</kbd></span><span class="w4"><kbd>0</kbd></span><span class="w5">名称在当前层当前构件类型下不允许重名</span><span class="w6"><kbd>296.5 FPS</kbd></span>
  </footer>

  <div class="taskbar">
    <button class="start" aria-label="开始"><svg viewBox="0 0 16 16"><path d="M0 2.300l7-1v6.200H0zM8 1.200L16 0v7.500H8zM0 8.500h7v6.200l-7-1zM8 8.500h8V16l-8-1.200z" fill="#fff"/></svg></button>
    <div class="ask">
      <svg class="ring" viewBox="0 0 22 22"><circle cx="11" cy="11" r="9" fill="none" stroke="#fff" stroke-width="2.400"/></svg>
      <input type="text" aria-label="搜索" placeholder="在这里输入你要搜索的内容">
      <svg class="mic" viewBox="0 0 12 18"><path d="M3.500 1.500h5v9h-5zM1 9v4h10V9M6 13v3.500M3 16.500h6" fill="none" stroke="#aaa" stroke-width="1.200"/></svg>
    </div>
    <div class="apps">
      <button aria-label="任务视图"><svg viewBox="0 0 26 26"><path d="M8.500 6.500h10v13h-10zM6 8.500H3.500v9H6M21 8.500h2.500v9H21" fill="none" stroke="#fff" stroke-width="1.400"/></svg></button>
      <button aria-label="助手"><svg viewBox="0 0 26 26"><rect x="2" y="2" width="22" height="22" rx="7" fill="#e4e8e8"/><path d="M13 13C12 9 13 5 16 2M13 13c4-1 8 0 11 3M13 13c1 4 0 8-3 11M13 13c-4 1-8 0-11-3" fill="none" stroke="#020b0e" stroke-width="1.800"/></svg></button>
      <button aria-label="浏览器"><svg viewBox="0 0 26 26"><path d="M21 18c-4 6-14 5-14-4 0-10 14-11 14 0H9" fill="none" stroke="#e4e8e8" stroke-width="4"/><path d="M5 24c-4-3 3-17 13-21 5-2 5 1 4 3" fill="none" stroke="#e4e8e8" stroke-width="1.800"/></svg></button>
      <button aria-label="通知"><svg viewBox="0 0 26 26"><path d="M17 7C9 1 1 8 4 16c3 8 15 7 16-1 0-6-8-9-11-3-2 5 4 8 7 4 1-3-3-4-4-2M7 9c4-5 12-3 14 3" fill="none" stroke="#dfe3e3" stroke-width="1.500"/><path d="M15 9c2-2 1-7 5-8 4 1 3 6 5 8zM18 10h4l-2 2z" fill="#e8ae10"/></svg></button>
      <button aria-label="Edge"><svg viewBox="0 0 26 26"><path d="M3 12C5 1 22-1 23 15H9c1 6 8 6 12 3v5c-9 4-17 0-17-7 0-3 2-6 4-7-3 0-4 2-5 3zm6-1h8c0-5-7-5-8 0z" fill="#1a7bd8"/></svg></button>
      <button aria-label="IE"><svg viewBox="0 0 26 26"><path d="M21 18c-4 6-14 5-14-4 0-10 14-11 14 0H9" fill="none" stroke="#49b4ee" stroke-width="4"/><path d="M4 24C-1 20 8 6 18 3c5-2 6 1 4 4" fill="none" stroke="#f0c430" stroke-width="2"/></svg></button>
      <button aria-label="资源管理器"><svg viewBox="0 0 26 26"><path d="M2 4h8l2 2h12v17H2z" fill="#fbdf86"/><path d="M2 4h8l1 3H2z" fill="#e8b030"/><path d="M6 23v-9h14v9h-4v-5h-6v5z" fill="#39a8dc"/></svg></button>
      <button class="run" aria-label="360浏览器"><svg viewBox="0 0 26 26"><circle cx="13" cy="13" r="10.500" fill="#54b828" stroke="#d8f0c8"/><path d="M19 16c-3 5-11 4-11-3 0-7 11-7 11 0H9" fill="none" stroke="#fff" stroke-width="3"/><path d="M4 25C3 14 14 5 24 2" fill="none" stroke="#a8e060" stroke-width="1.500"/></svg></button>
      <button class="run" aria-label="广联达"><svg viewBox="0 0 26 26"><path d="M26 1c-2 3-5 4-8 4-6 0-9 4-9 8 0 5 8 6 9 1 0-2-2-3-4-2 1-4 9-4 10 2 1 7-5 12-11 12C4 26-1 18 2 11 5 3 13 0 26 1z" fill="#1c9ae4"/></svg></button>
      <button class="run cur" aria-label="钢筋算量"><svg viewBox="0 0 24 24"><use href="#app"/></svg></button>
      <button class="run bare" aria-label="窗口"></button>
    </div>
    <div class="tray">
      <span class="link">链接</span>
      <span class="two cpu">22%<br>CPU使用</span>
      <svg viewBox="0 0 16 16"><path d="M2 11l6-6 6 6" /></svg>
      <svg viewBox="0 0 16 16" class="fillw"><use href="#bell"/></svg>
      <svg viewBox="0 0 16 16"><path d="M5.500 5.500h9v6h-9zM15.500 7v3M0 3h4v3H1v4h4M1 1v2M3 1v2"/><path d="M7 7h6v3H7z" fill="#fff"/></svg>
      <svg viewBox="0 0 16 16"><path d="M1 14C2 6 8 2 14 2M4 14c1-5 5-8 10-8M7 14c1-3 3-5 7-5M10 14c1-1 2-2 4-2" /></svg>
      <svg viewBox="0 0 18 16" class="w18"><path d="M1 6h3l4-4v12l-4-4H1zM10 5c2 2 2 4 0 6M12.500 3.500c3 3 3 6 0 9M15 2c4 4 4 8 0 12"/></svg>
      <svg viewBox="0 0 24 16" class="w24"><path d="M1 1.500h22v13H1z"/><path d="M4 5h16M4 8h16" stroke-dasharray="1.500 1.500"/><path d="M7 11.500h10"/></svg>
      <span class="zh">中</span>
      <svg viewBox="0 0 28 28" class="plain"><use href="#sogou"/></svg>
      <span class="two clock">11:12<br>2018/8/13</span>
      <svg viewBox="0 0 18 18" class="w18"><path d="M1.500 2.500h15v11h-4.500l-3 3v-3H1.500z"/></svg>
    </div>
  </div>

  <div class="ime">
    <svg class="slogo"><use href="#sogou"/></svg>
    <b>英</b>
    <svg viewBox="0 0 16 16"><circle cx="4" cy="5" r="2"/><path d="M9 7h4c1 3-1 5-3 6 1-2 1-3-1-4z"/></svg>
    <svg viewBox="0 0 16 16"><circle cx="8" cy="8" r="7" fill="none" stroke="#2274c8" stroke-width="1.600"/><circle cx="5.500" cy="6" r="1.200"/><circle cx="10.500" cy="6" r="1.200"/><path d="M4 9c2 4 6 4 8 0" fill="none" stroke="#2274c8" stroke-width="1.500"/></svg>
    <svg viewBox="0 0 16 16"><rect x="5" y="0" width="6" height="10" rx="3"/><path d="M3 6c0 8 10 8 10 0M8 12v3M5 15h6" fill="none" stroke="#2274c8" stroke-width="1.600"/></svg>
    <svg viewBox="0 0 16 16"><path d="M0 2h16v12H0z"/><path d="M2 5h12M2 8h12" stroke="#fff" stroke-width="1.500" stroke-dasharray="1.500 1"/><path d="M4 11.500h8" stroke="#fff" stroke-width="1.500"/></svg>
    <svg viewBox="0 0 16 16" class="pale"><circle cx="6" cy="4" r="3"/><path d="M0 13c0-6 5-6 8-5v5z"/><text x="5" y="15" font-size="9" font-family="Noto Sans" font-weight="700">25</text></svg>
    <svg viewBox="0 0 16 16"><path d="M1 2l4-1c1 2 5 2 6 0l4 1 1 4h-3v9H4V6H0z"/></svg>
    <svg viewBox="0 0 16 16"><path d="M15 3l-3 3-2-2 3-3C9-1 6 3 8 6L1 13l2 2 7-7c4 1 7-1 5-5z"/></svg>
  </div>
</div>
</body>
</html>
```
FILE: styles.css
```css
* { box-sizing: border-box; }
body {
  margin: 0;
  background: #f0f0f0;
  color: #000;
  font: 12px/16px "Noto Sans", "Noto Sans CJK SC", sans-serif;
}
button, input, select { font: inherit; color: inherit; margin: 0; padding: 0; border: 0; background: none; }
button { display: inline-flex; align-items: center; white-space: nowrap; }
select { appearance: none; }
ul { list-style: none; margin: 0; padding: 0; }
h1, h2 { margin: 0; font: inherit; }
kbd { font: 10px/16px "DejaVu Sans Mono", monospace; }
svg { display: block; flex: none; }
.sprite { position: absolute; width: 0; height: 0; }
.ic { width: 16px; height: 16px; }
.grow { flex: 1; }

.window { position: relative; display: flex; flex-direction: column; height: 100vh; overflow: hidden; }

/* title */
.titlebar { display: flex; align-items: center; gap: 5px; height: 23px; padding: 0 14px 0 2px; background: #fff; color: #999; }
.titlebar h1 { flex: 1; white-space: nowrap; overflow: hidden; font-family: Inter, "Noto Sans CJK SC", sans-serif; }
.winbtns { display: flex; gap: 33px; padding-right: 5px; }
.winbtns svg { width: 12px; height: 12px; fill: none; stroke: #888; }
.ball {
  position: absolute; left: 700px; top: -28px; width: 45px; height: 46px; padding-top: 26px;
  border: 1px solid #3a8a48; border-radius: 50%;
  background: #3fc257; color: #fff; font-weight: 700; text-align: center;
  box-shadow: 0 1px 4px #999;
}

/* rows of commands */
.menurow, .toolrow { display: flex; gap: 2px; }
.menurow { height: 31px; }
.toolrow { height: 30px; }
.seg { display: flex; align-items: center; background: linear-gradient(#fbfbfb, #efefef); border-radius: 3px; white-space: nowrap; }
.menu { display: flex; align-items: center; gap: 11px; flex: 0 0 935px; padding: 0 0 2px 7px; overflow: hidden; }
.wic { gap: 4px; }
.hint { flex: 0 0 187px; padding: 0 0 2px 29px; color: #6a3a10; }
.acct { flex: 1; gap: 9px; padding: 0 4px 2px 4px; }
.more { width: 8px; height: 8px; margin: 0 0 12px auto; }
.caret { width: 0; border: 3px solid transparent; border-top-color: currentColor; border-bottom: 0; }
.wic .caret { margin-left: 3px; }
.sep { width: 1px; height: 22px; margin: 0 3px; background: #b4b4b4; flex: none; }
.tb { gap: 4px; height: 24px; padding: 0 4px 0 3px; }
.off { color: #7b7b7b; }
.boxed { border: 1px solid #777; }
.toolrow .seg { padding-bottom: 3px; }
.s1 { flex: 0 0 151px; padding-left: 1px; padding-right: 3px; }
.s2 { flex: 0 0 549px; padding-left: 1px; padding-right: 3px; }
.s3 { flex: 1; padding-left: 1px; padding-right: 4px; }
.s1 .tb { padding-right: 5px; }
.s1 .caret { margin-left: 2px; }
.s3 .caret { margin: 0 1px 0 2px; }
.s3 .boxed { padding-right: 1px; }
.s3 .tight .caret { margin: 0; }

/* main split */
.main { position: relative; flex: 1; display: flex; min-height: 0; }
.nav { display: flex; flex-direction: column; flex: 0 0 165px; min-width: 0; padding: 1px 0 4px; }
.navhead { display: flex; align-items: center; gap: 9px; height: 14px; margin-bottom: 2px; padding-right: 3px; border: 1px solid #888; font-size: 13px; }
.navhead span { flex: 1; }
.navhead svg { width: 10px; height: 10px; }
.bar { justify-content: center; height: 22px; flex: none; border: 1px solid #9c9c9c; border-width: 1px 2px 1px 1px; background: #f0f0f0; }
.bar + .bar { border-top-color: #fff; }
.navtools { display: flex; align-items: center; gap: 8px; height: 26px; margin: 1px 2px 0; padding: 0 4px; background: linear-gradient(#fdfdfd, #ececec); border-left: 1px solid #aaa; }
.navtools svg { width: 18px; height: 16px; }
.treebox { display: flex; flex: 1; min-height: 0; background: #fff; border: 2px solid #8a8a90; border-width: 1px 2px; }
.navtree { margin: 0 1px 0 2px; border-width: 1px 1px 2px 1px; }
.tree { flex: 1; min-width: 0; white-space: nowrap; overflow: hidden; padding-top: 1px; }
.tree li { display: flex; align-items: center; height: 16px; }
.navtree .g { gap: 5px; padding-left: 3px; }
.navtree .ch { width: 16px; height: 16px; margin-right: -1px; color: #444; }
.navtree .shut .ch { transform: rotate(-90deg); color: #999; }
.navtree .c {
  padding-left: 42px;
  --vh: 100%; --rh: 100%;
  background:
    repeating-linear-gradient(#777 0 1px, #fff 1px 2px) 32px 0 / 1px var(--vh) no-repeat,
    repeating-linear-gradient(to right, #777 0 1px, #fff 1px 2px) 32px 8px / 10px 1px no-repeat,
    repeating-linear-gradient(#777 0 1px, #fff 1px 2px) 12px 0 / 1px var(--rh) no-repeat;
}
.navtree .end { --vh: 8px; }
.navtree .last { --rh: 0; }
.navtree .c .ic { margin-right: 5px; }
.cur { display: flex; align-items: center; }
.navtree .cur { background: #d9d9d9; }
.colbtn { width: 13px; height: 13px; margin-left: 1px; }
.sb { display: flex; flex: none; flex-direction: column; width: 15px; background: #f0f0f0; color: #555; margin-right: 1px; }
.sb svg { width: 15px; height: 18px; }
.sb .up { transform: scaleY(-1); }
.sb b { background: #cdcdcd; }
.th-nav { height: 62%; }
.th-comp { height: 62px; }
.th-edge { height: 385px; }

.work { flex: 1; display: flex; flex-direction: column; margin-left: 4px; min-width: 0; }
.subtools { height: 27px; padding-left: 3px; }
.subtools .tb { padding-right: 3px; }
.subtools .tb .caret { margin-left: 1px; }
.combo { display: flex; align-items: center; width: 62px; height: 22px; margin: 0 2px 0 6px; padding: 0 3px 0 2px; background: #fff; }
.combo select { flex: 1; min-width: 0; }
.cols { flex: 1; display: flex; gap: 3px; min-height: 0; padding-bottom: 2px; }
.comps { display: flex; flex-direction: column; flex: 0 0 185px; min-width: 0; margin-left: 1px; padding: 5px 0 0 1px; }
.search { display: flex; gap: 5px; padding-bottom: 2px; }
.search input { flex: 0 0 157px; min-width: 0; height: 24px; padding: 0 2px; border: 1px solid #666; border-width: 1px 2px 2px; background: #fff; }
.search input::placeholder { color: #888; opacity: 1; }
.items li {
  padding-left: 39px; font: 10px/16px "DejaVu Sans Mono", monospace;
  --vh: 100%;
  background:
    repeating-linear-gradient(#777 0 1px, #fff 1px 2px) 30px 0 / 1px var(--vh) no-repeat,
    repeating-linear-gradient(to right, #777 0 1px, #fff 1px 2px) 30px 8px / 10px 1px no-repeat;
}
.items .end { --vh: 8px; }
.items span { display: flex; align-items: center; gap: 6px; height: 16px; padding: 0 4px; }
.items svg { width: 12px; height: 12px; }
.items .sel { background: #316ac5; color: #0a0a50; }
.comps .sb { margin-right: 2px; }

.tabs { display: flex; align-items: flex-end; }
.tabs button { height: 20px; padding: 0 7px 0 6px; border: 1px solid #d5d5d5; border-bottom: 0; }
.tabs .on { background: #fff; }
.props { flex: 1; display: flex; flex-direction: column; padding-top: 1px; border-left: 1px solid #ccc; background: #fff; min-width: 0; }
.props .tabs { background: #f0f0f0; }
.propbox { flex: 1; margin: 4px 0 4px 3px; border: 1px solid #999; }
.propbox table { width: 100%; border-collapse: collapse; table-layout: fixed; }
.propbox th { height: 24px; font-weight: 400; background: linear-gradient(#fafafa, #ebebeb); }
.propbox th, .propbox td { border: 1px solid #c2c2c2; border-top: 0; border-left: 0; padding: 0; }
.propbox td { height: 19px; padding-left: 20px; white-space: nowrap; line-height: 18px; }
.propbox .n { width: 21px; padding: 0; text-align: center; background: #f2f2f2; }
.propbox .name { width: 191px; }
.propbox .blue { color: #0000e0; }
.propbox .dim { color: #808080; }
.propbox .hot td { background: #0078d7; color: #fff; }
.propbox .hot .n { background: #fcd38a; color: #6a1640; }
.propbox .ex { padding-left: 2px; }
.ex button {
  width: 13px; height: 13px; margin-right: 5px; border: 1px solid #aaa; vertical-align: middle;
  background: linear-gradient(#000, #000) 2px 5px / 7px 1px no-repeat, linear-gradient(#000, #000) 5px 2px / 1px 7px no-repeat, #fff;
}
.edge { width: 22px; margin: 0; padding: 54px 8px 8px 0; border-right: 1px solid #ccc; }

/* floating editor */
.dialog {
  position: absolute; left: 575px; right: 22px; top: 0; bottom: 5px;
  display: flex; flex-direction: column; padding: 0 6px 7px 7px;
  border: 1px solid #333; border-top: 0; background: linear-gradient(#99b4d1, #b9d1ea 28px);
  box-shadow: inset -1px -1px #5cd0f0;
}
.dialog h2 { height: 29px; padding-top: 9px; }
.dbody { flex: 1; display: flex; flex-direction: column; background: #f0f0f0; min-height: 0; }
.dtabs { padding-left: 2px; }
.dtabs button { padding: 0 9px 0 4px; height: 19px; }
.dtabs .on { height: 21px; padding: 0 13px 0 6px; }
.dpanel { flex: 1; display: flex; flex-direction: column; min-height: 0; padding: 3px 3px 0; border: 2px solid #fff; border-right-color: #ddd; }
.drow { height: 27px; align-self: flex-start; flex: none; padding-right: 6px; }
.drow + .drow { height: 28px; }
.lab { padding: 0 4px 0 6px; }
.pb { gap: 6px; height: 23px; padding: 0 4px; border: 1px solid transparent; }
.pb.on { border-color: #0078d7; background: #e0ecf7; }
.pi { gap: 3px; padding: 0 3px; }
.cb { padding: 0 6px 0 3px; }
.c8 { width: 76px; margin-left: 0; }
.canvas { flex: 1; min-height: 0; border: 2px solid #f00; background: #15181f; }
.canvas svg { width: 100%; height: 100%; }
.axis { fill: none; stroke: #3a414c; stroke-dasharray: 8 2 3 2; }
.axis .solid { stroke-dasharray: none; }
.axis .far { stroke: #777; stroke-dasharray: 3 2; }
.axt text { fill: #3a414c; font: 12px "Liberation Mono", monospace; text-anchor: middle; }
.cover { fill: none; stroke: #a8ccf0; stroke-dasharray: 4 3; }
.wall { fill: none; stroke: #f2f2f2; stroke-width: 2; }
.steel { fill: none; stroke: #cc181e; stroke-width: 4; }
.lead { fill: none; stroke: #fffff0; }
.dimg { fill: none; stroke: #7cc464; }
.dots { fill: #f4e020; }
.dimt text { fill: #fff; font: 7px "DejaVu Sans Mono", monospace; text-anchor: middle; }
.grn { stroke: #0f0; stroke-width: 2; }
.snap { height: 27px; align-self: flex-start; flex: none; gap: 2px; padding-right: 8px; }
.dstatus { display: flex; gap: 3px; height: 23px; margin-top: 4px; }
.dstatus span { border: 1px solid #d4d4d4; background: linear-gradient(#fff, #f0f0f0); padding: 2px 0 0 4px; }
.xy { flex: 0 0 98px; }
.dstatus .msg { flex: 1; display: flex; padding-left: 1px; }
.msg svg { width: 12px; height: 12px; margin: 7px 0 0 auto; }

/* status */
.status { display: flex; gap: 2px; height: 20px; }
.status span { border: 1px solid #d0d0d0; background: linear-gradient(#fdfdfd, #f0f0f0); padding: 1px 0 0 1px; white-space: nowrap; }
.w1 { flex: 0 0 148px; }
.w2 { flex: 0 0 78px; }
.w3 { flex: 0 0 98px; }
.w4 { flex: 0 0 48px; }
.w5 { flex: 1; }
.w6 { flex: 0 0 70px; }

/* taskbar */
.taskbar { display: flex; align-items: stretch; height: 40px; background: #020b0e; color: #e6e6e6; }
.start { justify-content: center; width: 48px; }
.start svg { width: 16px; height: 16px; }
.ask { display: flex; align-items: center; gap: 5px; flex: 0 0 344px; padding: 0 14px 0 9px; background: #333; }
.ask input { flex: 1; min-width: 0; font-size: 14px; line-height: 20px; }
.ask input::placeholder { color: #9a9a9a; opacity: 1; }
.ring { width: 22px; height: 22px; }
.mic { width: 12px; height: 18px; }
.apps { display: flex; flex: 0 0 520px; }
.apps button { flex: 0 0 45px; justify-content: center; border: 1px solid transparent; border-width: 0 1px 3px 0; background-clip: padding-box; }
.apps button:nth-child(-n+5) { flex-basis: 51px; }
.apps button:first-child { flex-basis: 47px; }
.apps svg { width: 24px; height: 24px; margin-top: 2px; }
.apps .run { border-bottom-color: #76b9ed; }
.apps .run:not(.cur) { background: linear-gradient(#76b9ed, #76b9ed) center bottom / 36px 3px no-repeat; border-width: 0; padding-bottom: 3px; }
.apps .cur { background-color: #363d40; }
.tray { flex: 1; display: flex; align-items: center; gap: 8px; padding: 0 24px 0 0; justify-content: flex-end; }
.tray svg { width: 16px; height: 16px; fill: none; stroke: #fff; stroke-width: 1.2; }
.tray .fillw { color: #fff; stroke: none; }
.tray .plain { stroke: none; }
.tray .w18 { width: 18px; }
.tray .w24 { width: 24px; }
.two { text-align: center; line-height: 18px; }
.link { margin-right: 12px; }
.cpu { margin-right: 9px; }
.clock { margin: 0 9px 0 6px; }
.zh { font-size: 13px; padding: 0 3px; }

/* input method bar */
.ime {
  position: absolute; left: 872px; top: 37px; display: flex; align-items: center; gap: 6px;
  width: 200px; height: 23px; padding: 0 3px 0 0; border: 1px solid #a8bcd8; background: #fff; color: #2274c8;
}
.ime svg { width: 16px; height: 16px; fill: #2274c8; }
.ime .slogo { width: 28px; height: 28px; margin: 0 -1px 3px -6px; }
.ime b { font-size: 14px; }
.ime .pale { fill: #b4c0d4; }
```
